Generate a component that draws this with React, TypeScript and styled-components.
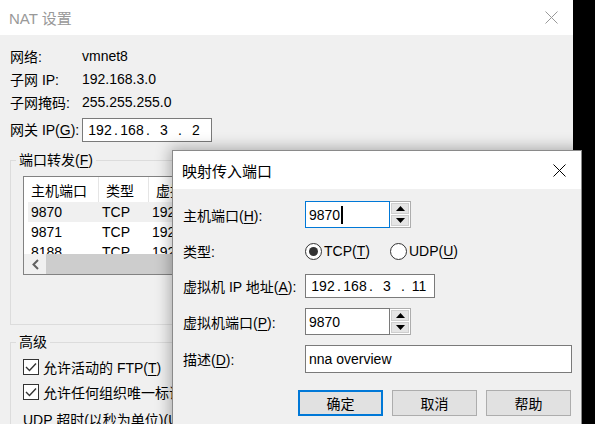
import React from 'react'
import styled, { createGlobalStyle } from 'styled-components'

const GlobalStyle = createGlobalStyle`
    html, body {
        margin: 0;
        padding: 0;
        background: #000;
        overflow: hidden;
    }
    body {
        font-family: "Liberation Sans", "Noto Sans CJK SC", sans-serif;
        font-size: 14px;
        color: #000;
    }
    * {
        box-sizing: border-box;
    }
`

const CloseIcon = ({ color }: { color: string }) => (
    <svg width="13" height="13" viewBox="0 0 13 13">
        <path d="M0.5 0.5 L12.5 12.5 M12.5 0.5 L0.5 12.5" stroke={color} strokeWidth="1" fill="none" />
    </svg>
)

const Arrow = ({ up }: { up?: boolean }) => (
    <svg width="9" height="5" viewBox="0 0 9 5">
        <polygon points={up ? '0,5 9,5 4.5,0' : '0,0 9,0 4.5,5'} fill="#000" />
    </svg>
)

const Spin = ({ value, focused }: { value: string; focused?: boolean }) => (
    <SpinWrap>
        <TextBox $w={85} $h={27} $focused={focused}>
            {value}
            {focused && <Caret />}
        </TextBox>
        <SpinButtons>
            <SpinButton>
                <Arrow up />
            </SpinButton>
            <SpinButton>
                <Arrow />
            </SpinButton>
        </SpinButtons>
    </SpinWrap>
)

const IpAddress = ({ octets, w, h }: { octets: string[]; w: number; h: number }) => (
    <IpBox $w={w} $h={h}>
        {octets.map((o, i) => (
            <React.Fragment key={i}>
                {i > 0 && <Dot>.</Dot>}
                <Octet>{o}</Octet>
            </React.Fragment>
        ))}
    </IpBox>
)

const Check = () => (
    <CheckBox>
        <svg width="12" height="10" viewBox="0 0 12 10">
            <path d="M1 5 L4.5 8.5 L11 1.5" stroke="#333" strokeWidth="1.4" fill="none" />
        </svg>
    </CheckBox>
)

const rows = [
    ['9870', 'TCP', '192.168.3.11'],
    ['9871', 'TCP', '192.168.3.11'],
    ['8188', 'TCP', '192.168.3.11'],
]

export default function App() {
    return (
        <>
            <GlobalStyle />
            <Desktop>
                <Window $x={0} $y={0} $w={573} $h={440}>
                    <TitleBar $h={35} $inactive>
                        <Title>NAT 设置</Title>
                        <CloseBox>
                            <CloseIcon color="#999" />
                        </CloseBox>
                    </TitleBar>
                    <NatBody>
                        <InfoGrid>
                            <span>网络:</span>
                            <span>vmnet8</span>
                            <span>子网 IP:</span>
                            <span>192.168.3.0</span>
                            <span>子网掩码:</span>
                            <span>255.255.255.0</span>
                            <GatewayLabel>
                                网关 IP(<Key>G</Key>):
                            </GatewayLabel>
                            <IpAddress octets={['192', '168', '3', '2']} w={130} h={24} />
                        </InfoGrid>

                        <Group>
                            <Legend>
                                端口转发(<Key>F</Key>)
                            </Legend>
                            <ListBox>
                                <ListHeader>
                                    <HeaderCell>主机端口</HeaderCell>
                                    <HeaderCell>类型</HeaderCell>
                                    <HeaderCell>虚拟机 IP 地址</HeaderCell>
                                </ListHeader>
                                <ListRows>
                                    {rows.map((r, i) => (
                                        <ListRow key={i} $selected={i === 0}>
                                            <span>{r[0]}</span>
                                            <span>{r[1]}</span>
                                            <span>{r[2]}</span>
                                        </ListRow>
                                    ))}
                                </ListRows>
                                <HScroll>
                                    <ScrollArrow>
                                        <svg width="7" height="11" viewBox="0 0 7 11">
                                            <path d="M6 1 L1.5 5.5 L6 10" stroke="#606060" strokeWidth="2" fill="none" />
                                        </svg>
                                    </ScrollArrow>
                                    <ScrollThumb />
                                </HScroll>
                            </ListBox>
                        </Group>

                        <Group $advanced>
                            <Legend>高级</Legend>
                            <CheckRow>
                                <Check />
                                <span>
                                    允许活动的 FTP(<Key>T</Key>)
                                </span>
                            </CheckRow>
                            <CheckRow>
                                <Check />
                                <span>允许任何组织唯一标识符</span>
                            </CheckRow>
                            <TimeoutRow>UDP 超时(以秒为单位)(U):</TimeoutRow>
                        </Group>
                    </NatBody>
                </Window>

                <Window $x={172} $y={150} $w={410} $h={300} $front>
                    <TitleBar $h={38}>
                        <Title>映射传入端口</Title>
                        <CloseBox>
                            <CloseIcon color="#000" />
                        </CloseBox>
                    </TitleBar>
                    <MapBody>
                        <FormGrid>
                            <span>
                                主机端口(<Key>H</Key>):
                            </span>
                            <Spin value="9870" focused />

                            <span>类型:</span>
                            <RadioGroup>
                                <RadioOption $w={85}>
                                    <Radio $checked />
                                    <span>
                                        TCP(<Key>T</Key>)
                                    </span>
                                </RadioOption>
                                <RadioOption>
                                    <Radio />
                                    <span>
                                        UDP(<Key>U</Key>)
                                    </span>
                                </RadioOption>
                            </RadioGroup>

                            <span>
                                虚拟机 IP 地址(<Key>A</Key>):
                            </span>
                            <IpAddress octets={['192', '168', '3', '11']} w={130} h={24} />

                            <span>
                                虚拟机端口(<Key>P</Key>):
                            </span>
                            <Spin value="9870" />

                            <span>
                                描述(<Key>D</Key>):
                            </span>
                            <TextBox $w={267} $h={28}>
                                nna overview
                            </TextBox>
                        </FormGrid>
                        <ButtonRow>
                            <Button $default>确定</Button>
                            <Button>取消</Button>
                            <Button>帮助</Button>
                        </ButtonRow>
                    </MapBody>
                </Window>
            </Desktop>
        </>
    )
}

const Desktop = styled.div`
    position: relative;
    width: 595px;
    height: 424px;
    overflow: hidden;
    background: #000;
`

type WindowProps = {
    $x: number
    $y: number
    $w: number
    $h: number
    $front?: boolean
}

const Window = styled.div<WindowProps>`
    position: absolute;
    left: ${(p) => p.$x}px;
    top: ${(p) => p.$y}px;
    width: ${(p) => p.$w}px;
    height: ${(p) => p.$h}px;
    display: flex;
    flex-direction: column;
    background: #f0f0f0;
    overflow: hidden;
    ${(p) => (p.$front ? 'border: 1px solid #8a8a8a; box-shadow: 0 0 14px 2px rgba(0, 0, 0, 0.3);' : '')}
`

const TitleBar = styled.div<{ $h: number; $inactive?: boolean }>`
    flex: none;
    height: ${(p) => p.$h}px;
    background: #fff;
    display: flex;
    align-items: center;
    justify-content: space-between;
    padding-left: 9px;
    color: ${(p) => (p.$inactive ? '#999' : '#000')};
`

const Title = styled.div`
    font-size: 15px;
`

const CloseBox = styled.div`
    width: 44px;
    height: 100%;
    display: flex;
    align-items: center;
    justify-content: center;
`

const Key = styled.span`
    text-decoration: underline;
    text-underline-offset: 2px;
`

const NatBody = styled.div`
    padding-top: 9px;
`

const InfoGrid = styled.div`
    display: grid;
    grid-template-columns: 72px auto;
    grid-template-rows: 23px 23px 23px 29px;
    align-items: center;
    justify-content: start;
    padding: 0 10px;
`

const GatewayLabel = styled.span`
    align-self: end;
    line-height: 23px;
`

const IpBox = styled.div<{ $w: number; $h: number }>`
    align-self: end;
    width: ${(p) => p.$w}px;
    height: ${(p) => p.$h}px;
    border: 1px solid #7a7a7a;
    background: #fff;
    display: flex;
    align-items: center;
    padding-left: 5px;
`

const Octet = styled.span`
    width: 24px;
    text-align: center;
`

const Dot = styled.span`
    width: 8px;
    text-align: center;
`

const Group = styled.fieldset<{ $advanced?: boolean }>`
    margin: ${(p) => (p.$advanced ? '8px' : '9px')} 10px 0;
    min-inline-size: auto;
    border: 1px solid #dcdcdc;
    padding: ${(p) => (p.$advanced ? '3px 12px 0' : '7px 12px 49px')};
`

const Legend = styled.legend`
    padding: 0 3px;
    margin-left: -7px;
    line-height: 18px;
`

const ListBox = styled.div`
    width: 527px;
    height: 99px;
    border: 1px solid #828282;
    background: #fff;
    display: flex;
    flex-direction: column;
`

const columns = '75px 50px 1fr'

const ListHeader = styled.div`
    flex: none;
    height: 25px;
    display: grid;
    grid-template-columns: ${columns};
`

const HeaderCell = styled.div`
    display: flex;
    align-items: center;
    padding-left: 7px;
    border-right: 1px solid #e5e5e5;
    white-space: nowrap;
`

const ListRows = styled.div`
    flex: 1;
    overflow: hidden;
`

const ListRow = styled.div<{ $selected?: boolean }>`
    height: 20px;
    display: grid;
    grid-template-columns: 71px 50px 1fr;
    align-items: center;
    margin-left: 4px;
    padding-left: 3px;
    background: ${(p) => (p.$selected ? '#f0f0f0' : 'transparent')};
`

const HScroll = styled.div`
    flex: none;
    height: 20px;
    display: flex;
    background: #f0f0f0;
`

const ScrollArrow = styled.div`
    width: 22px;
    display: flex;
    align-items: center;
    justify-content: center;
`

const ScrollThumb = styled.div`
    flex: 1;
    background: #cdcdcd;
`

const CheckRow = styled.div`
    height: 25px;
    display: flex;
    align-items: center;
    gap: 4px;
    white-space: nowrap;
`

const CheckBox = styled.div`
    width: 16px;
    height: 16px;
    border: 1px solid #333;
    background: #fff;
    display: flex;
    align-items: center;
    justify-content: center;
`

const TimeoutRow = styled.div`
    height: 25px;
    margin-top: 2px;
    display: flex;
    align-items: center;
    white-space: nowrap;
`

const MapBody = styled.div`
    padding: 12px 10px 0;
`

const FormGrid = styled.div`
    display: grid;
    grid-template-columns: 122px 1fr;
    grid-template-rows: 27px 26px 24px 27px 28px;
    row-gap: 10px;
    align-items: center;
    white-space: nowrap;
`

const SpinWrap = styled.div`
    display: flex;
`

const TextBox = styled.div<{ $w: number; $h: number; $focused?: boolean }>`
    width: ${(p) => p.$w}px;
    height: ${(p) => p.$h}px;
    border: 1px solid ${(p) => (p.$focused ? '#0078d7' : '#7a7a7a')};
    background: #fff;
    display: flex;
    align-items: center;
    padding-left: 3px;
`

const Caret = styled.span`
    width: 2px;
    height: 18px;
    background: #000;
    margin-left: 1px;
`

const SpinButtons = styled.div`
    width: 21px;
    height: 27px;
    border: 1px solid #adadad;
    border-left: none;
    display: flex;
    flex-direction: column;
    gap: 1px;
    padding: 1px;
    background: #fff;
`

const SpinButton = styled.div`
    flex: 1;
    background: #e5e5e5;
    border: 1px solid #cfcfcf;
    display: flex;
    align-items: center;
    justify-content: center;
`

const RadioGroup = styled.div`
    display: flex;
    align-items: center;
`

const RadioOption = styled.div<{ $w?: number }>`
    display: flex;
    align-items: center;
    gap: 2px;
    ${(p) => (p.$w ? `width: ${p.$w}px;` : '')}
`

const Radio = styled.div<{ $checked?: boolean }>`
    width: 17px;
    height: 17px;
    border-radius: 50%;
    border: 1px solid #333;
    background: #fff;
    display: flex;
    align-items: center;
    justify-content: center;

    &::after {
        content: '';
        width: 9px;
        height: 9px;
        border-radius: 50%;
        background: ${(p) => (p.$checked ? '#333' : 'transparent')};
    }
`

const ButtonRow = styled.div`
    display: flex;
    justify-content: flex-end;
    gap: 9px;
    margin-top: 17px;
`

const Button = styled.div<{ $default?: boolean }>`
    width: 85px;
    height: 26px;
    background: #e1e1e1;
    border: ${(p) => (p.$default ? '2px solid #0078d7' : '1px solid #adadad')};
    display: flex;
    align-items: center;
    justify-content: center;
`
